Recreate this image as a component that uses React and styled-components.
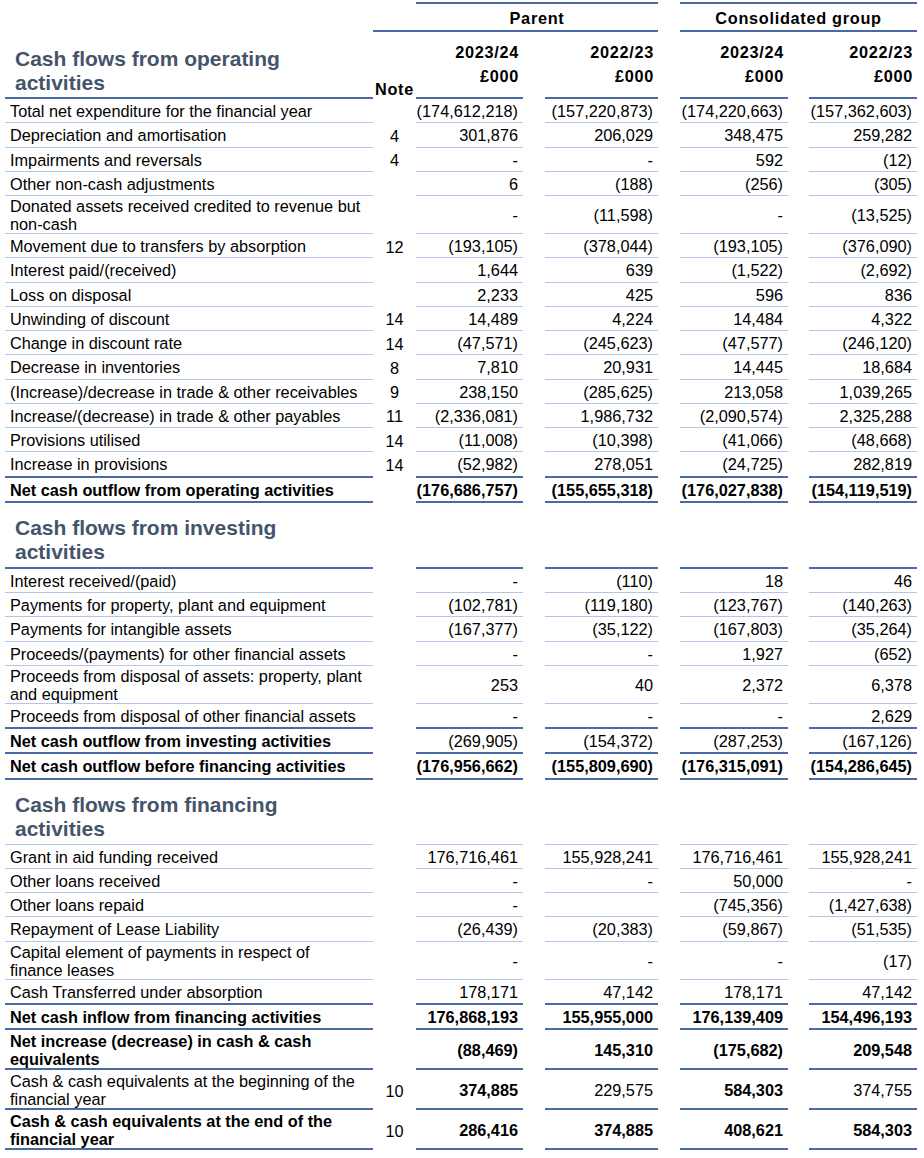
import React from "react";
import styled, { createGlobalStyle, css } from "styled-components";

const COLS = "368px 43px 107px 135px 130px 129px";
const THICK = "2px solid #4a6aa5";
const THIN = "1px solid #b4c6e7";
const GAPS = [0, 22, 22, 21];

const GlobalStyle = createGlobalStyle`
  body {
    margin: 0;
    background: #fff;
    color: #000;
    font-family: "Liberation Sans", Arial, sans-serif;
  }
`;

const lineFor = (line) =>
  line === "thick" ? THICK : line === "thin" ? THIN : "none";

const Sheet = styled.div`
  width: 912px;
  padding: 2px 0 6px 5px;
`;

const Row = styled.div`
  display: grid;
  grid-template-columns: ${COLS};
`;

// thick-ruled rows sit a touch taller, as in the printed statement
const cellBase = css`
  min-height: ${(p) => (p.$line === "thick" ? "21.25px" : "22.25px")};
  display: flex;
  align-items: center;
  font-size: 16.3px;
  line-height: 18px;
  padding-top: ${(p) => (p.$line === "thick" ? "1.5px" : "1px")};
  padding-bottom: ${(p) => (p.$line === "thick" ? "0.5px" : "0")};
  border-bottom: ${(p) => lineFor(p.$line)};
  font-weight: ${(p) => (p.$bold ? 700 : 400)};
`;

const Label = styled.div`
  ${cellBase};
  padding-left: 5px;
  padding-right: 9px;
`;

const Note = styled.div`
  ${cellBase};
  justify-content: center;
`;

const Value = styled.div`
  ${cellBase};
  justify-content: flex-end;
  text-align: right;
  margin-left: ${(p) => p.$gap}px;
  padding-left: 5px;
  padding-right: 5px;
`;

const SectionTitle = styled.div`
  padding: ${(p) => (p.$first ? "15px 60px 2px 10px" : "13px 60px 3px 10px")};
  font-size: 21px;
  line-height: 24px;
  font-weight: 700;
  color: #44546a;
  border-bottom: ${(p) => lineFor(p.$line)};
`;

const headText = css`
  font-size: 16.3px;
  font-weight: 700;
  letter-spacing: 0.7px;
`;

const GroupHead = styled.div`
  ${headText};
  grid-column: span 2;
  margin-left: ${(p) => p.$gap}px;
  border-top: ${THICK};
  border-bottom: ${THICK};
  padding-top: 2px;
  height: 24px;
  line-height: 24px;
  text-align: center;
`;

const NoteRule = styled.div`
  border-bottom: ${THICK};
`;

const NoteHead = styled.div`
  ${headText};
  display: flex;
  align-items: flex-end;
  justify-content: center;
  padding-bottom: 3px;
  line-height: 14px;
`;

const ColHead = styled.div`
  ${headText};
  display: flex;
  flex-direction: column;
  justify-content: flex-end;
  align-items: flex-end;
  margin-left: ${(p) => p.$gap}px;
  padding: 0 4px 9px 0;
  line-height: 24px;
  border-bottom: ${(p) => lineFor(p.$line)};
`;

const YEARS = ["2023/24", "2022/23", "2023/24", "2022/23"];

const sections = [
  {
    title: "Cash flows from operating activities",
    titleLine: "thick",
    head: true,
    rows: [
      ["Total net expenditure for the financial year", "", ["(174,612,218)", "(157,220,873)", "(174,220,663)", "(157,362,603)"]],
      ["Depreciation and amortisation", "4", ["301,876", "206,029", "348,475", "259,282"]],
      ["Impairments and reversals", "4", ["-", "-", "592", "(12)"]],
      ["Other non-cash adjustments", "", ["6", "(188)", "(256)", "(305)"]],
      ["Donated assets received credited to revenue but non-cash", "", ["-", "(11,598)", "-", "(13,525)"]],
      ["Movement due to transfers by absorption", "12", ["(193,105)", "(378,044)", "(193,105)", "(376,090)"]],
      ["Interest paid/(received)", "", ["1,644", "639", "(1,522)", "(2,692)"]],
      ["Loss on disposal", "", ["2,233", "425", "596", "836"]],
      ["Unwinding of discount", "14", ["14,489", "4,224", "14,484", "4,322"]],
      ["Change in discount rate", "14", ["(47,571)", "(245,623)", "(47,577)", "(246,120)"]],
      ["Decrease in inventories", "8", ["7,810", "20,931", "14,445", "18,684"]],
      ["(Increase)/decrease in trade & other receivables", "9", ["238,150", "(285,625)", "213,058", "1,039,265"]],
      ["Increase/(decrease) in trade & other payables", "11", ["(2,336,081)", "1,986,732", "(2,090,574)", "2,325,288"]],
      ["Provisions utilised", "14", ["(11,008)", "(10,398)", "(41,066)", "(48,668)"]],
      ["Increase in provisions", "14", ["(52,982)", "278,051", "(24,725)", "282,819"], { line: "thick" }],
      ["Net cash outflow from operating activities", "", ["(176,686,757)", "(155,655,318)", "(176,027,838)", "(154,119,519)"], { line: "thick", bold: true, valueBold: [1, 1, 1, 1] }],
    ],
  },
  {
    title: "Cash flows from investing activities",
    titleLine: "thick",
    rows: [
      ["Interest received/(paid)", "", ["-", "(110)", "18", "46"]],
      ["Payments for property, plant and equipment", "", ["(102,781)", "(119,180)", "(123,767)", "(140,263)"]],
      ["Payments for intangible assets", "", ["(167,377)", "(35,122)", "(167,803)", "(35,264)"]],
      ["Proceeds/(payments) for other financial assets", "", ["-", "-", "1,927", "(652)"]],
      ["Proceeds from disposal of assets: property, plant and equipment", "", ["253", "40", "2,372", "6,378"]],
      ["Proceeds from disposal of other financial assets", "", ["-", "-", "-", "2,629"], { line: "thick" }],
      ["Net cash outflow from investing activities", "", ["(269,905)", "(154,372)", "(287,253)", "(167,126)"], { line: "thick", bold: true }],
      ["Net cash outflow before financing activities", "", ["(176,956,662)", "(155,809,690)", "(176,315,091)", "(154,286,645)"], { line: "thick", bold: true, valueBold: [1, 1, 1, 1] }],
    ],
  },
  {
    title: "Cash flows from financing activities",
    titleLine: "thin",
    rows: [
      ["Grant in aid funding received", "", ["176,716,461", "155,928,241", "176,716,461", "155,928,241"]],
      ["Other loans received", "", ["-", "-", "50,000", "-"]],
      ["Other loans repaid", "", ["-", "", "(745,356)", "(1,427,638)"]],
      ["Repayment of Lease Liability", "", ["(26,439)", "(20,383)", "(59,867)", "(51,535)"]],
      ["Capital element of payments in respect of finance leases", "", ["-", "-", "-", "(17)"]],
      ["Cash Transferred under absorption", "", ["178,171", "47,142", "178,171", "47,142"], { line: "thick" }],
      ["Net cash inflow from financing activities", "", ["176,868,193", "155,955,000", "176,139,409", "154,496,193"], { line: "thick", bold: true, valueBold: [1, 1, 1, 1] }],
      ["Net increase (decrease) in cash & cash equivalents", "", ["(88,469)", "145,310", "(175,682)", "209,548"], { line: "thick", bold: true, valueBold: [1, 1, 1, 1] }],
      ["Cash & cash equivalents at the beginning of the financial year", "10", ["374,885", "229,575", "584,303", "374,755"], { line: "thick", valueBold: [1, 0, 1, 0] }],
      ["Cash & cash equivalents at the end of the financial year", "10", ["286,416", "374,885", "408,621", "584,303"], { line: "thick", bold: true, valueBold: [1, 1, 1, 1] }],
    ],
  },
];

const HeadRow = () => (
  <Row>
    <div />
    <NoteRule />
    <GroupHead $gap={0}>Parent</GroupHead>
    <GroupHead $gap={22}>Consolidated group</GroupHead>
  </Row>
);

const TitleRow = ({ title, line, head }) => (
  <Row>
    <SectionTitle $line={line} $first={head}>{title}</SectionTitle>
    {head ? <NoteHead>Note</NoteHead> : <div />}
    {GAPS.map((gap, i) => (
      <ColHead key={i} $gap={gap} $line={line}>
        {head && (
          <>
            <span>{YEARS[i]}</span>
            <span>£000</span>
          </>
        )}
      </ColHead>
    ))}
  </Row>
);

const DataRow = ({ label, note, values, opts = {} }) => {
  const line = opts.line || "thin";
  const vb = opts.valueBold || [0, 0, 0, 0];
  return (
    <Row>
      <Label $line={line} $bold={opts.bold}>{label}</Label>
      <Note $line="none">{note}</Note>
      {values.map((v, i) => (
        <Value key={i} $gap={GAPS[i]} $line={line} $bold={vb[i]}>
          {v}
        </Value>
      ))}
    </Row>
  );
};

const App = () => (
  <>
    <GlobalStyle />
    <Sheet>
      <HeadRow />
      {sections.map((s) => (
        <React.Fragment key={s.title}>
          <TitleRow title={s.title} line={s.titleLine} head={s.head} />
          {s.rows.map(([label, note, values, opts]) => (
            <DataRow key={label} label={label} note={note} values={values} opts={opts} />
          ))}
        </React.Fragment>
      ))}
    </Sheet>
  </>
);

export default App;
